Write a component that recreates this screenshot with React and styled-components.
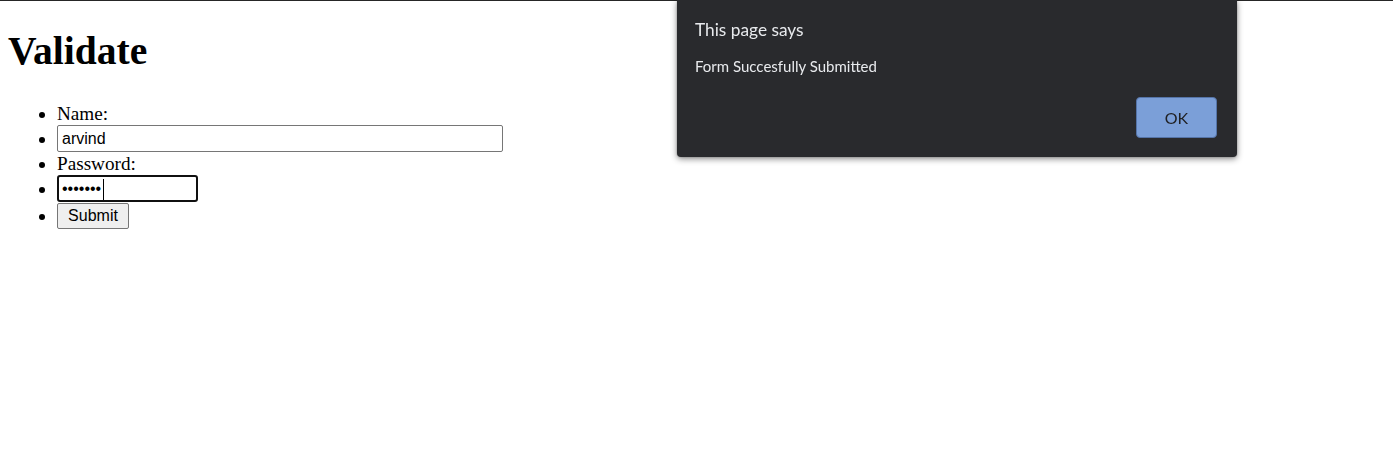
import React from "react";
import styled, { createGlobalStyle } from "styled-components";

const GlobalStyle = createGlobalStyle`
  body {
    margin: 0;
    background: #fff;
    color: #000;
    font-family: "Liberation Serif", "Times New Roman", serif;
  }
`;

const Page = styled.div`
  border-top: 1px solid #262626;
  padding-left: 8px;
  min-height: 475px;
`;

const Title = styled.h1`
  margin: 29px 0 0;
  font-size: 39.6px;
  line-height: 43px;
  font-weight: bold;
`;

const FieldList = styled.ul`
  margin: 30px 0 0;
  padding-left: 49px;
  font-size: 19.2px;
  list-style: disc;
`;

const Item = styled.li`
  height: ${props => props.h || 22}px;
  line-height: ${props => props.h || 22}px;
`;

const TextInput = styled.input`
  box-sizing: border-box;
  vertical-align: top;
  width: ${props => props.w}px;
  height: 27px;
  margin: 0;
  padding: 0 4px;
  border: 1px solid #767676;
  border-radius: 2px;
  font: 16px "Liberation Sans", Arial, sans-serif;
  color: #000;
  background: #fff;
  outline: none;
`;

const CaretBox = styled.span`
  position: relative;
  display: inline-block;
  vertical-align: top;
`;

const PasswordInput = styled(TextInput)`
  border: 2px solid #101010;
  border-radius: 3px;
  padding: 0 3px;
  caret-color: transparent;
`;

const Caret = styled.span`
  position: absolute;
  left: 46px;
  top: 4px;
  width: 1px;
  height: 21px;
  background: #000;
`;

const SubmitButton = styled.button`
  box-sizing: border-box;
  vertical-align: top;
  width: 72px;
  height: 26px;
  margin: 0;
  padding: 0;
  border: 1px solid #767676;
  border-radius: 2px;
  background: #efefef;
  font: 16px "Liberation Sans", Arial, sans-serif;
  color: #000;
`;

const Dialog = styled.div`
  position: fixed;
  left: 677px;
  top: 0;
  width: 560px;
  height: 157px;
  box-sizing: border-box;
  padding: 18px 20px 19px 18px;
  background: #292a2d;
  border-radius: 0 0 4px 4px;
  box-shadow: 0 2px 6px rgba(0, 0, 0, 0.45), 0 0 2px rgba(0, 0, 0, 0.3);
  display: flex;
  flex-direction: column;
  font-family: Lato, "Noto Sans", sans-serif;
  color: #e8eaed;
`;

const DialogTitle = styled.div`
  font-size: 17.3px;
  line-height: 24px;
`;

const DialogText = styled.div`
  margin-top: 14px;
  font-size: 15px;
  line-height: 20px;
`;

const DialogActions = styled.div`
  margin-top: auto;
  display: flex;
  justify-content: flex-end;
`;

const OkButton = styled.button`
  width: 81px;
  height: 41px;
  border: 1px solid #5574a8;
  border-radius: 4px;
  background: #7b9fd8;
  color: #202124;
  font: 16px Lato, "Noto Sans", sans-serif;
  padding: 0;
`;

export default function App() {
  return (
    <>
      <GlobalStyle />
      <Page>
        <Title>Validate</Title>
        <FieldList>
          <Item>Name:</Item>
          <Item h={27}>
            <TextInput w={446} type="text" defaultValue="arvind" />
          </Item>
          <Item h={23}>Password:</Item>
          <Item h={28}>
            <CaretBox>
              <PasswordInput w={141} type="password" defaultValue="1234567" />
              <Caret />
            </CaretBox>
          </Item>
          <Item h={26}>
            <SubmitButton>Submit</SubmitButton>
          </Item>
        </FieldList>
      </Page>
      <Dialog>
        <DialogTitle>This page says</DialogTitle>
        <DialogText>Form Succesfully Submitted</DialogText>
        <DialogActions>
          <OkButton>OK</OkButton>
        </DialogActions>
      </Dialog>
    </>
  );
}
